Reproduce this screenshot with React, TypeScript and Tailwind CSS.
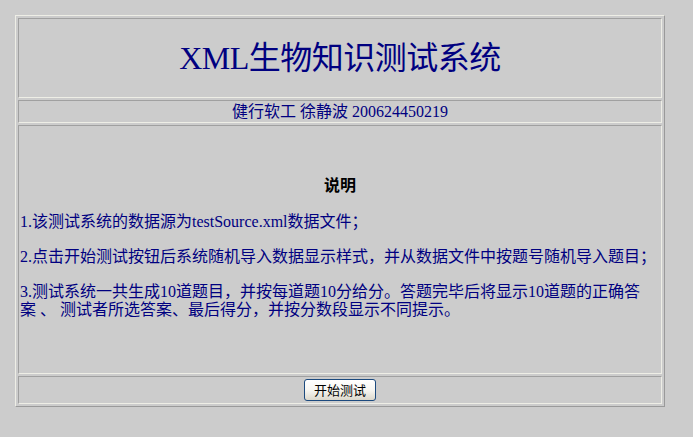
import React from "react";

export default function App() {
  const serif = { fontFamily: '"Liberation Serif", "Noto Sans CJK SC", serif' };
  const cell =
    "border border-t-[#a0a0a0] border-l-[#a0a0a0] border-b-[#eeeee6] border-r-[#eeeee6]";
  return (
    <div className="min-h-[437px] w-full bg-[#cccccc] pt-[15px] pl-[15px]" style={serif}>
      <div className="w-[650px] border border-t-[#eeeee6] border-l-[#eeeee6] border-b-[#9a9a9a] border-r-[#9a9a9a] p-[2px] flex flex-col gap-[2px]">
        <div className={`${cell} h-[80px] flex items-center justify-center`}>
          <h1 className="text-[32px] leading-[36px] text-[#000080] tracking-[-0.5px]">
            XML生物知识测试系统
          </h1>
        </div>
        <div className={`${cell} h-[23px] flex items-center justify-center`}>
          <p className="text-[16px] leading-[20px] text-[#000080]">
            健行软工 徐静波 200624450219
          </p>
        </div>
        <div className={`${cell} h-[249px] pt-[51px] pl-[1px] pr-[1px]`}>
          <p className="text-center font-bold text-[16px] leading-[18px] text-black mb-[18px]">
            说明
          </p>
          <p className="text-[16px] leading-[18px] text-[#000080] mb-[17px]">
            1.该测试系统的数据源为testSource.xml数据文件；
          </p>
          <p className="text-[16px] leading-[18px] text-[#000080] mb-[17px]">
            2.点击开始测试按钮后系统随机导入数据显示样式，并从数据文件中按题号随机导入题目；
          </p>
          <p className="text-[16px] leading-[18px] text-[#000080]">
            3.测试系统一共生成10道题目，并按每道题10分给分。答题完毕后将显示10道题的正确答
            <br />案 、 测试者所选答案、最后得分，并按分数段显示不同提示。
          </p>
        </div>
        <div className={`${cell} h-[28px] flex items-center justify-center`}>
          <button
            className="w-[72px] h-[22px] rounded-[3px] border border-[#1c4a7e] bg-gradient-to-b from-white via-[#f7f6f2] to-[#dcd8cc] text-[13px] leading-[14px] text-black flex items-center justify-center"
            style={{ fontFamily: '"Noto Sans CJK SC", sans-serif' }}
          >
            开始测试
          </button>
        </div>
      </div>
    </div>
  );
}
